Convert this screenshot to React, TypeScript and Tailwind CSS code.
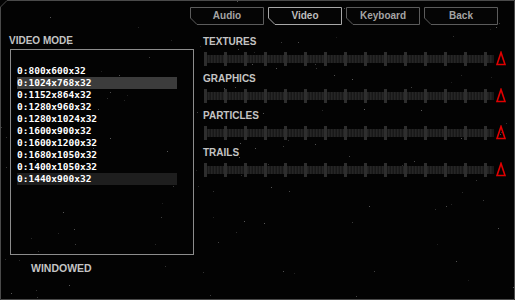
import React from 'react';

const modes = [
   '0:800x600x32',
   '0:1024x768x32',
   '0:1152x864x32',
   '0:1280x960x32',
   '0:1280x1024x32',
   '0:1600x900x32',
   '0:1600x1200x32',
   '0:1680x1050x32',
   '0:1400x1050x32',
   '0:1440x900x32',
];

const tabs = ['Audio', 'Video', 'Keyboard', 'Back'];
const sliders = ['TEXTURES', 'GRAPHICS', 'PARTICLES', 'TRAILS'];

// deterministic star field
const stars = (() => {
   let s = 1337;
   const rnd = () => {
      s = (s * 16807) % 2147483647;
      return s / 2147483647;
   };
   const out: { x: number; y: number; o: number }[] = [];
   for (let i = 0; i < 130; i++) {
      out.push({ x: Math.floor(rnd() * 515), y: Math.floor(rnd() * 300), o: 0.1 + rnd() * 0.25 });
   }
   return out;
})();

const Tab: React.FC<{ label: string; active?: boolean }> = ({ label, active }) => (
   <div className="relative w-[74px] h-[18px] flex items-center justify-center">
      <svg className="absolute inset-0" width="74" height="18">
         <polygon
            points="0.5,0.5 73.5,0.5 73.5,17.5 7,17.5 0.5,11"
            fill="#050505"
            stroke={active ? '#a8a8a8' : '#5c5c5c'}
            strokeWidth="1"
         />
      </svg>
      <span className={`relative font-bold text-[10px] leading-none ${active ? 'text-[#bdbdbd]' : 'text-[#a4a4a4]'}`}>
         {label}
      </span>
   </div>
);

const Track = () => {
   const major = Array.from({ length: 15 }, (_, i) => 1 + i * 20);
   const minor = Array.from({ length: 96 }, (_, i) => 1 + i * 3);
   return (
      <div className="flex items-center gap-[1px]">
         <svg width="291" height="14">
            <rect x="0" y="3" width="290" height="8" fill="#181818" />
            {minor.map((x) => (
               <rect key={x} x={x} y="3" width="1.5" height="8" fill="#262626" />
            ))}
            {major.map((x) => (
               <rect key={x} x={x - 1} y="0" width="3" height="14" fill="#2e2e2e" />
            ))}
         </svg>
         <svg width="10" height="15" className="-mt-[1px]">
            <polygon points="5,1.5 9,13.5 1,13.5" fill="none" stroke="#e00000" strokeWidth="1.6" />
         </svg>
      </div>
   );
};

const App = () => {
   return (
      <div className="relative w-[515px] h-[300px] bg-[#030303] overflow-hidden" style={{ fontFamily: '"Liberation Sans", Arial, sans-serif' }}>
         {/* star field */}
         <svg className="absolute inset-0" width="515" height="300">
            {stars.map((st, i) => (
               <rect key={i} x={st.x} y={st.y} width="1" height="1" fill="#ffffff" opacity={st.o} />
            ))}
         </svg>
         {/* outer frame */}
         <svg className="absolute inset-0" width="515" height="300">
            <polyline points="0.5,7 7,0.5 514.5,0.5 514.5,299.5 0.5,299.5 0.5,7" fill="none" stroke="#4a4a4a" strokeWidth="1" />
         </svg>

         <div className="relative flex flex-col">
            <div className="flex justify-end gap-[4px] pt-[7px] pr-[17px]">
               {tabs.map((t) => (
                  <Tab key={t} label={t} active={t === 'Video'} />
               ))}
            </div>

            <div className="flex pt-[10px]">
               <div className="flex flex-col pl-[9px] w-[194px]">
                  <div className="text-[10px] leading-[12px] font-bold text-[#c4c4c4]">VIDEO MODE</div>
                  <div className="mt-[2px] ml-[1px] w-[184px] h-[206px] border border-[#8c8c8c] pt-[15px] pl-[6px]">
                     {modes.map((m, i) => (
                        <div
                           key={m}
                           className={`w-[160px] h-[12px] flex items-center text-[9.5px] font-bold text-white ${i === 1 ? 'bg-[#3c3c3c]' : i === 9 ? 'bg-[#1e1e1e]' : ''}`}
                           style={{ fontFamily: '"DejaVu Sans Mono", monospace' }}
                        >
                           {m}
                        </div>
                     ))}
                  </div>
                  <div className="mt-[7px] pl-[22px] text-[10.5px] leading-[12px] font-bold text-[#c4c4c4]">WINDOWED</div>
               </div>

               <div className="flex flex-col pl-[9px] pt-[1px]">
                  {sliders.map((s) => (
                     <div key={s} className="flex flex-col h-[37px]">
                        <div className="text-[10px] leading-[12px] font-bold text-[#c4c4c4]">{s}</div>
                        <div className="pl-[1px] mt-[4px]">
                           <Track />
                        </div>
                     </div>
                  ))}
               </div>
            </div>
         </div>
      </div>
   );
};

export default App;
